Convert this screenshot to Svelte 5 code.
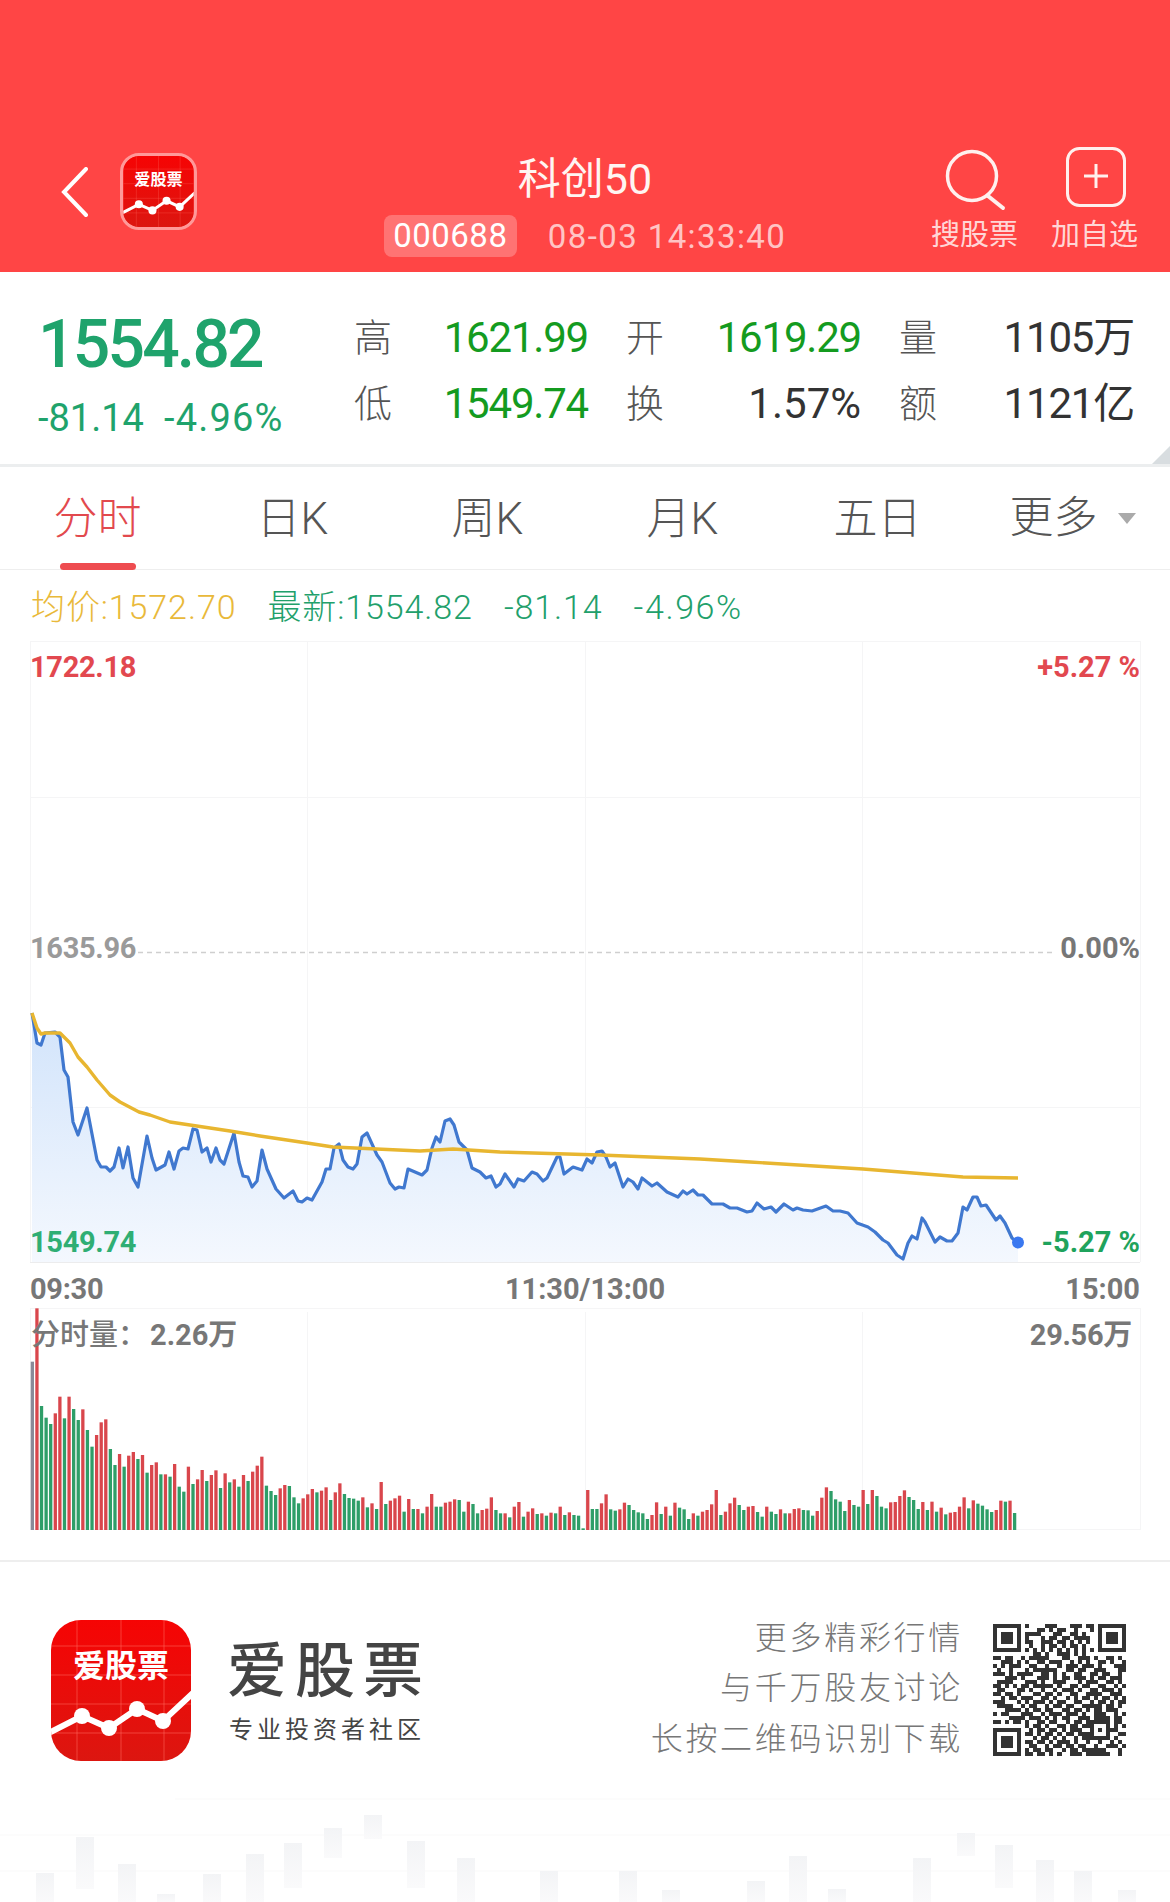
<script>
  // intraday price, page coordinates (x,y)
  const pricePts = `32,1013 37,1043 41,1045 45,1033 55,1032 60,1037 64,1070 68,1077 73,1122 78,1135 87,1108 97,1160 101,1167 106,1167 110,1171 114,1167 119,1148 123,1168 128,1147 133,1178 138,1187 147,1136 152,1158 156,1170 165,1165 169,1152 174,1169 179,1151 183,1148 188,1149 193,1129 197,1130 202,1152 207,1148 211,1162 216,1148 220,1160 224,1164 234,1133 239,1162 243,1176 248,1177 252,1187 257,1181 262,1150 267,1169 276,1189 284,1198 293,1191 298,1201 302,1202 307,1198 312,1200 322,1182 326,1169 330,1169 334,1148 339,1144 343,1160 348,1167 353,1169 357,1164 362,1137 367,1133 377,1155 382,1162 390,1183 395,1189 399,1187 404,1188 408,1169 422,1175 427,1170 432,1148 436,1137 440,1142 445,1121 450,1119 454,1125 459,1142 467,1150 472,1168 480,1172 486,1178 491,1176 496,1187 500,1184 505,1174 514,1187 518,1179 524,1181 532,1172 537,1174 543,1181 547,1178 557,1157 560,1157 564,1174 573,1167 582,1170 587,1159 592,1163 597,1152 602,1151 606,1157 610,1167 615,1163 623,1187 628,1179 633,1182 638,1189 642,1178 652,1186 657,1183 667,1192 678,1197 683,1191 687,1194 693,1190 698,1195 703,1195 712,1204 723,1204 730,1208 737,1208 747,1212 752,1211 757,1203 764,1209 771,1207 776,1212 784,1204 793,1210 797,1208 803,1210 812,1211 826,1206 833,1211 840,1211 848,1213 857,1223 868,1227 875,1232 883,1240 888,1243 897,1255 903,1259 908,1243 912,1236 917,1239 922,1218 925,1222 935,1242 940,1237 947,1241 952,1241 958,1233 963,1207 967,1210 973,1197 977,1197 981,1206 986,1205 996,1220 1000,1216 1005,1223 1012,1238 1018,1243`;
  const avgPts = `32,1013 37,1028 41,1034 45,1033 60,1033 70,1043 78,1057 87,1067 97,1080 110,1095 120,1102 139,1112 150,1115 170,1122 190,1125 230,1131 260,1136 307,1143 333,1147 420,1151 453,1149 500,1152 600,1155 700,1159 750,1162 863,1169 963,1177 1018,1178`;
  const areaPts = `${pricePts} 1018,1262 32,1262`;

  // volume bars: colour + top of bar read off the chart
  const volA = 'x245 r85 g378 g413 g432 r400 r350 g415 r350 g387 g420 r388 g450 g500 r465 r427 r418 g507 g555 r522 g560 r527 r516 g537 r525 g578 r555 r547 g583 r583 g590 r552 g620 g635 r560 g612 r598 r570 g603 r585 r571 g624 r580 g607 r598 g620 r585 g603 r575 r557 r530 g617 g633 g645 r625 r615 g618 g652 g670 r655 r643 r627 g637 r632 r622 g660 r637 r610 g642 g654 g656 g662 r652 g682 r670 g687 r606 g672 r662 r655 r647 g695 r657 g687 r687';
  const volB = 'g190 r170 r132 g170 g170 r158 r155 r148 g150 g185 r155 g162 g190 r180 r176 r142 g180 g190 r190 g202 r170 r156 g200 r185 r175 g192 r190 g197 r188 g190 r170 g195 r187 g195 g197 g235 r120 g177 g177 r160 r133 g178 g182 r178 r158 g165 g180 g187 g190 g207 r195 r157 g192 r170 g197 r158 g173 g178 g207 r190 g197 r185 r180 r163 r120 g195 r185 r160 r143 g165 g180 r170 r168 g186 g200 r170 g185 g192 r178 g190 r190 r177 r175 g180 g181 g197 r183 r143 r112 g123 g148 g155 g183 r150 g165 g170 r120 g162 r120 g138 g170 g175 r157 r156 r138 r121 g141 g150 g177 r156 g180 r155 g185 r173 g193 r188 r186 r170 r142 g175 r151 g161 g167 g178 g186 r180 r152 g155 r152 g189';
  const colors = { r: '#d9464c', g: '#2e9e68', x: '#8a8a98' };
  const bars = [
    ...volA.split(' ').map((s) => ({ c: s[0], h: (750 - +s.slice(1)) / 3 })),
    ...volB.split(' ').map((s) => ({ c: s[0], h: (240 - +s.slice(1)) / 3 }))
  ];

  const qrRows = [
    '1111111 0 10000111000111011 0 1111111',
    '1000001 0 00011010110010001 0 1000001',
    '1011101 0 11110001100110100 0 1011101',
    '1011101 0 10001011011011110 0 1011101',
    '1011101 0 11001110110101010 0 1011101',
    '1000001 0 01001011010110100 0 1000001',
    '1111111 0 10101010101010101 0 1111111',
    '0000000 0 00110100111010100 0 0000000',
    '11011001011 11100011001 11010011010',
    '00111010100 11011100101 01001101001',
    '10101110011 00100101110 11101000111',
    '01001000101 11111001101 10011100011',
    '11101011110 01101010011 00110110010',
    '00011101000 11101011011 10101101110',
    '01111000111 01001110001 01110011010',
    '11010101101 11110100110 11001100101',
    '01100011010 01001011101 00110111010',
    '11011010001 10110100110 01111001110',
    '00101101110 01101001010 11010110101',
    '11100010101 11010110011 00101101011',
    '01111001011 00101101100 11111011010',
    '00011110101 10110011011 01011011100',
    '10110001110 01011101110 10011100101',
    '00001111011 10101011001 11011110110',
    '11010110100 11011001011 01111110110',
    '00000000 1011010011011011 10001 0101',
    '11111110 0101101101011100 10101 1100',
    '10000010 1101011010110111 10001 0011',
    '10111010 0010110101001011 11111 0100',
    '10111010 1101101011101001 00100 1010',
    '10111010 0110010110110110 01001 1101',
    '10000010 1011011001011011 11110 0010',
    '11111110 1101101010011101 11111 0010'
  ];
  const qrCells = [];
  qrRows.forEach((row, y) => {
    [...row.replaceAll(' ', '')].forEach((v, x) => {
      if (v === '1') qrCells.push({ x, y });
    });
  });

  // faded candles behind the footer: x, top, bottom (y from 1780)
  const ghost = [
    [36, 92, 122], [76, 56, 108], [118, 83, 122], [157, 113, 122], [203, 93, 122],
    [246, 73, 122], [284, 62, 107], [324, 47, 77], [364, 34, 58], [407, 60, 107],
    [457, 77, 122], [540, 90, 122], [619, 90, 122], [662, 109, 122], [747, 100, 122],
    [789, 75, 122], [828, 108, 122], [913, 77, 122], [957, 52, 75], [995, 64, 107],
    [1036, 79, 122], [1074, 90, 122], [1118, 109, 122]
  ];

  const tabs = ['分时', '日K', '周K', '月K', '五日'];
</script>

{#snippet logo()}
  <svg class="logo-svg" viewBox="0 0 140 141">
    <defs>
      <linearGradient id="logoBg" x1="0" y1="0" x2="0" y2="1">
        <stop offset="0" stop-color="#f60404" />
        <stop offset="1" stop-color="#dc1610" />
      </linearGradient>
      <clipPath id="logoClip"><rect width="140" height="141" rx="30" /></clipPath>
    </defs>
    <g clip-path="url(#logoClip)">
      <rect width="140" height="141" fill="url(#logoBg)" />
      <path d="M26 0V141M70 0V141M113 0V141M0 26H140M0 55H140M0 84H140M0 113H140" stroke="#ff6a60" stroke-opacity="0.55" stroke-width="1" />
      <polyline points="-2,113 31,96 58,108 86,89 112,101 142,73" fill="none" stroke="#fff" stroke-width="6" />
      <circle cx="31" cy="96" r="8" fill="#fff" />
      <circle cx="58" cy="108" r="8" fill="#fff" />
      <circle cx="86" cy="89" r="8" fill="#fff" />
      <circle cx="112" cy="101" r="8" fill="#fff" />
    </g>
    <text class="logo-text" x="70" y="57" text-anchor="middle">爱股票</text>
  </svg>
{/snippet}

<div class="page">
  <header class="header">
    <div class="head-left">
      <svg class="back" viewBox="0 0 27 50" width="27" height="50">
        <path d="M25 2 L3 25 L25 48" fill="none" stroke="#fff" stroke-width="4" stroke-linecap="round" />
      </svg>
      <div class="mini-logo">{@render logo()}</div>
    </div>
    <div class="head-center">
      <div class="title">科创50</div>
      <div class="sub">
        <span class="code">000688</span>
        <span class="time">08-03 14:33:40</span>
      </div>
    </div>
    <div class="head-right">
      <div class="action">
        <svg viewBox="0 0 60 60" width="60" height="60">
          <circle cx="28" cy="28" r="24.5" fill="none" stroke="#fff0ee" stroke-width="3.5" />
          <path d="M44 48 L59 60" stroke="#fff0ee" stroke-width="4" stroke-linecap="round" />
        </svg>
        <span>搜股票</span>
      </div>
      <div class="action">
        <svg viewBox="0 0 60 60" width="60" height="60">
          <rect x="3.5" y="0.5" width="57" height="57" rx="12" fill="none" stroke="#fff0ee" stroke-width="3" />
          <path d="M32 16V40M20 28H44" stroke="#fff0ee" stroke-width="3" />
        </svg>
        <span>加自选</span>
      </div>
    </div>
  </header>

  <section class="quote">
    <div class="quote-main">
      <div class="price">1554.82</div>
      <div class="change"><span>-81.14</span><span class="pct">-4.96%</span></div>
    </div>
    <div class="stats">
      <span class="lab">高</span><span class="val up">1621.99</span>
      <span class="lab">开</span><span class="val up">1619.29</span>
      <span class="lab">量</span><span class="val end">1105万</span>
      <span class="lab">低</span><span class="val up">1549.74</span>
      <span class="lab">换</span><span class="val wide">1.57%</span>
      <span class="lab">额</span><span class="val end">1121亿</span>
    </div>
    <i class="corner"></i>
  </section>

  <nav class="tabs">
    {#each tabs as tab, i}
      <div class="tab" class:active={i === 0}>{tab}</div>
    {/each}
    <div class="tab more">更多<i class="caret"></i></div>
  </nav>

  <div class="legend">
    <span class="avg">均价:1572.70</span>
    <span class="now">最新:1554.82</span>
    <span class="now">-81.14</span>
    <span class="now pct">-4.96%</span>
  </div>

  <svg class="chart" viewBox="0 641 1170 889" width="1170" height="889">
    <defs>
      <linearGradient id="areaFill" gradientUnits="userSpaceOnUse" x1="0" y1="1013" x2="0" y2="1262">
        <stop offset="0" stop-color="#d2e4fb" />
        <stop offset="1" stop-color="#f4f8fe" />
      </linearGradient>
    </defs>

    <path d="M30.5 641V1262M1140.5 641V1262M307.5 641V1262M585.5 641V1262M862.5 641V1262M30 641.5H1140M30 797.5H1140M30 1107.5H1140" stroke="#f5f5f6" stroke-width="1" fill="none" />
    <path d="M30 1262.5H1140" stroke="#ececed" stroke-width="1" />
    <path d="M138 952.5H1052" stroke="#cfcfcf" stroke-width="1.5" stroke-dasharray="5 4" />

    <polygon points={areaPts} fill="url(#areaFill)" />
    <polyline points={pricePts} fill="none" stroke="#4078cf" stroke-width="3.2" stroke-linejoin="round" />
    <polyline points={avgPts} fill="none" stroke="#e8b630" stroke-width="3.4" stroke-linejoin="round" />
    <circle cx="1018" cy="1242.5" r="6" fill="#3a78f0" />

    <text class="axis tight" x="30" y="677" fill="#e2484f">1722.18</text>
    <text class="axis" x="1140" y="677" text-anchor="end" fill="#e2484f">+5.27 %</text>
    <text class="axis tight" x="30" y="958" fill="#9a9a9a">1635.96</text>
    <text class="axis" x="1140" y="958" text-anchor="end" fill="#777">0.00%</text>
    <text class="axis tight" x="30" y="1252" fill="#2fae74">1549.74</text>
    <text class="axis" x="1140" y="1252" text-anchor="end" fill="#1fa35c">-5.27 %</text>
    <text class="axis tight" x="30" y="1299" fill="#777">09:30</text>
    <text class="axis" x="585" y="1299" text-anchor="middle" fill="#777">11:30/13:00</text>
    <text class="axis" x="1140" y="1299" text-anchor="end" fill="#777">15:00</text>

    <path d="M30.5 1308V1530M1140.5 1308V1530M307.5 1312V1530M585.5 1312V1530M862.5 1312V1530M30 1308.5H1140" stroke="#f5f5f6" stroke-width="1" fill="none" />
    <path d="M30 1529.5H1140" stroke="#f5f5f6" stroke-width="1" />
    {#each bars as bar, i}
      <rect x={30.7 + i * 4.59} y={1530 - bar.h} width="3.3" height={bar.h} fill={colors[bar.c]} />
    {/each}
    <text class="axis vol" x="31" y="1345" fill="#777">分时量：</text>
    <text class="axis" x="150" y="1345" fill="#777">2.26万</text>
    <text class="axis tight" x="1132" y="1345" text-anchor="end" fill="#777">29.56万</text>
  </svg>

  <footer class="footer">
    <div class="brand">
      <div class="big-logo">{@render logo()}</div>
      <div class="brand-text">
        <div class="brand-name">爱股票</div>
        <div class="brand-slogan">专业投资者社区</div>
      </div>
      <div class="promo">
        <div>更多精彩行情</div>
        <div>与千万股友讨论</div>
        <div>长按二维码识别下载</div>
      </div>
      <svg class="qr" viewBox="0 0 33 33" width="133" height="132" preserveAspectRatio="none" shape-rendering="crispEdges">
        {#each qrCells as c}
          <rect x={c.x} y={c.y} width="1" height="1" fill="#333" />
        {/each}
      </svg>
    </div>
    <svg class="ghost" viewBox="0 0 1170 122" width="1170" height="122">
      <defs>
        <linearGradient id="ghostFill" x1="0" y1="0" x2="0" y2="1">
          <stop offset="0" stop-color="#f3f4f6" />
          <stop offset="1" stop-color="#fafafb" />
        </linearGradient>
      </defs>
      <path d="M175 18H1170M0 54H1170M0 90H1170" stroke="#fbfbfb" stroke-width="1.5" />
      {#each ghost as g}
        <rect x={g[0]} y={g[1]} width="18" height={g[2] - g[1]} fill="url(#ghostFill)" />
      {/each}
    </svg>
  </footer>
</div>

<style>
  :global(body) {
    margin: 0;
    background: #fff;
  }

  .page {
    width: 1170px;
    height: 1902px;
    overflow: hidden;
    font-family: Roboto, "Noto Sans CJK SC", sans-serif;
    color: #333;
  }

  .header {
    box-sizing: border-box;
    height: 272px;
    padding-top: 146px;
    background: #ff4545;
    display: grid;
    grid-template-columns: 1fr auto 1fr;
  }

  .head-left {
    display: flex;
    align-items: center;
    align-self: start;
    gap: 32px;
    padding: 7px 0 0 61px;
  }

  .mini-logo {
    box-sizing: border-box;
    width: 77px;
    height: 77px;
    border: 3px solid rgba(255, 255, 255, 0.45);
    border-radius: 19px;
    overflow: hidden;
  }

  .logo-svg {
    display: block;
    width: 100%;
    height: 100%;
  }

  .logo-text {
    font-family: "Noto Sans CJK SC", sans-serif;
    font-size: 32px;
    font-weight: 700;
    fill: #fff;
  }

  .head-center {
    display: flex;
    flex-direction: column;
    align-items: center;
  }

  .title {
    margin-top: 11px;
    font-size: 43px;
    line-height: 44px;
    font-weight: 400;
    color: #fff5f2;
  }

  .sub {
    display: flex;
    align-items: center;
    gap: 31px;
    margin-top: 14px;
    font-size: 33px;
    color: rgba(255, 255, 255, 0.7);
  }

  .code {
    width: 133px;
    height: 42px;
    line-height: 42px;
    text-align: center;
    border-radius: 8px;
    color: #fff;
    background: rgba(255, 255, 255, 0.25);
    letter-spacing: 0.5px;
  }

  .time {
    letter-spacing: 1.4px;
  }

  .head-right {
    display: flex;
    justify-content: flex-end;
    gap: 33px;
    padding-right: 32px;
  }

  .action {
    display: flex;
    flex-direction: column;
    align-items: center;
    gap: 10px;
    margin-top: 2px;
    font-size: 29px;
    line-height: 34px;
    color: rgba(255, 255, 255, 0.8);
  }

  .action svg {
    display: block;
    overflow: visible;
  }

  .quote {
    position: relative;
    box-sizing: border-box;
    height: 195px;
    border-bottom: 3px solid #eceeef;
    display: flex;
  }

  .quote-main {
    width: 354px;
    padding: 30px 0 0 38px;
    box-sizing: border-box;
    color: #1fa36c;
  }

  .price {
    font-size: 66px;
    line-height: 66px;
    margin-top: 10px;
    font-weight: 500;
    letter-spacing: -2.8px;
  }

  .change {
    display: flex;
    gap: 20px;
    margin-top: 18px;
    font-size: 38px;
    line-height: 44px;
  }

  .change .pct {
    letter-spacing: 1.2px;
  }

  .stats {
    display: grid;
    grid-template-columns: 38px 234px 38px 235px 38px 197px;
    grid-auto-rows: 66px;
    align-content: start;
    padding-top: 33px;
    align-items: center;
  }

  .lab {
    font-size: 38px;
    line-height: 66px;
    font-weight: 300;
    color: #555;
  }

  .val {
    padding-right: 38px;
    font-size: 42px;
    line-height: 66px;
    letter-spacing: -1.2px;
    text-align: right;
    color: #333;
  }

  .val.end {
    padding-right: 0;
  }

  .val.wide {
    letter-spacing: 0;
  }

  .up {
    color: #149b1f;
  }

  .corner {
    position: absolute;
    right: 0;
    bottom: 0;
    width: 0;
    height: 0;
    border-style: solid;
    border-width: 0 0 18px 18px;
    border-color: transparent transparent #d8dde0 transparent;
  }

  .tabs {
    box-sizing: border-box;
    height: 103px;
    display: flex;
    border-bottom: 1px solid #eee;
  }

  .tab {
    position: relative;
    width: 195px;
    text-align: center;
    font-size: 44px;
    line-height: 104px;
    font-weight: 300;
    color: #555;
  }

  .tab.active {
    color: #e2494e;
  }

  .tab.active::after {
    content: "";
    position: absolute;
    left: 60px;
    bottom: -1px;
    width: 76px;
    height: 7px;
    border-radius: 4px;
    background: #ee4c50;
  }

  .more {
    display: flex;
    justify-content: center;
    align-items: center;
    gap: 20px;
  }

  .caret {
    width: 0;
    height: 0;
    border-style: solid;
    border-width: 11px 9.5px 0 9.5px;
    border-color: #aaa transparent transparent transparent;
  }

  .legend {
    box-sizing: border-box;
    height: 71px;
    padding: 12px 0 0 31px;
    display: flex;
    gap: 31px;
    font-size: 34px;
    line-height: 50px;
    font-weight: 300;
    letter-spacing: 0.9px;
  }

  .avg {
    color: #e9b93a;
  }

  .now {
    color: #22a06b;
  }

  .now.pct {
    letter-spacing: 1.6px;
  }

  .chart {
    display: block;
  }

  .axis {
    font-family: Roboto, "Noto Sans CJK SC", sans-serif;
    font-size: 29px;
    font-weight: 700;
  }

  .axis.tight {
    letter-spacing: -0.3px;
  }

  .axis.vol {
    font-weight: 500;
  }

  .footer {
    margin-top: 30px;
    border-top: 2px solid #eee;
  }

  .brand {
    display: flex;
    align-items: center;
    height: 141px;
    margin: 58px 0 20px;
    padding: 0 44px 0 51px;
  }

  .big-logo {
    width: 140px;
    height: 141px;
  }

  .brand-text {
    margin-left: 36px;
    padding-bottom: 4px;
    display: flex;
    flex-direction: column;
    gap: 18px;
    color: #444;
    font-family: "Noto Sans CJK SC", sans-serif;
  }

  .brand-name {
    font-size: 60px;
    line-height: 60px;
    font-weight: 500;
    letter-spacing: 8px;
  }

  .brand-slogan {
    margin-left: 2px;
    font-size: 24px;
    line-height: 28px;
    letter-spacing: 4px;
  }

  .promo {
    margin-left: auto;
    padding-bottom: 4px;
    text-align: right;
    font-size: 32px;
    line-height: 50.5px;
    font-weight: 300;
    letter-spacing: 2.7px;
    color: #777;
  }

  .qr {
    margin-left: 30px;
    margin-bottom: 2px;
  }

  .ghost {
    display: block;
  }
</style>
